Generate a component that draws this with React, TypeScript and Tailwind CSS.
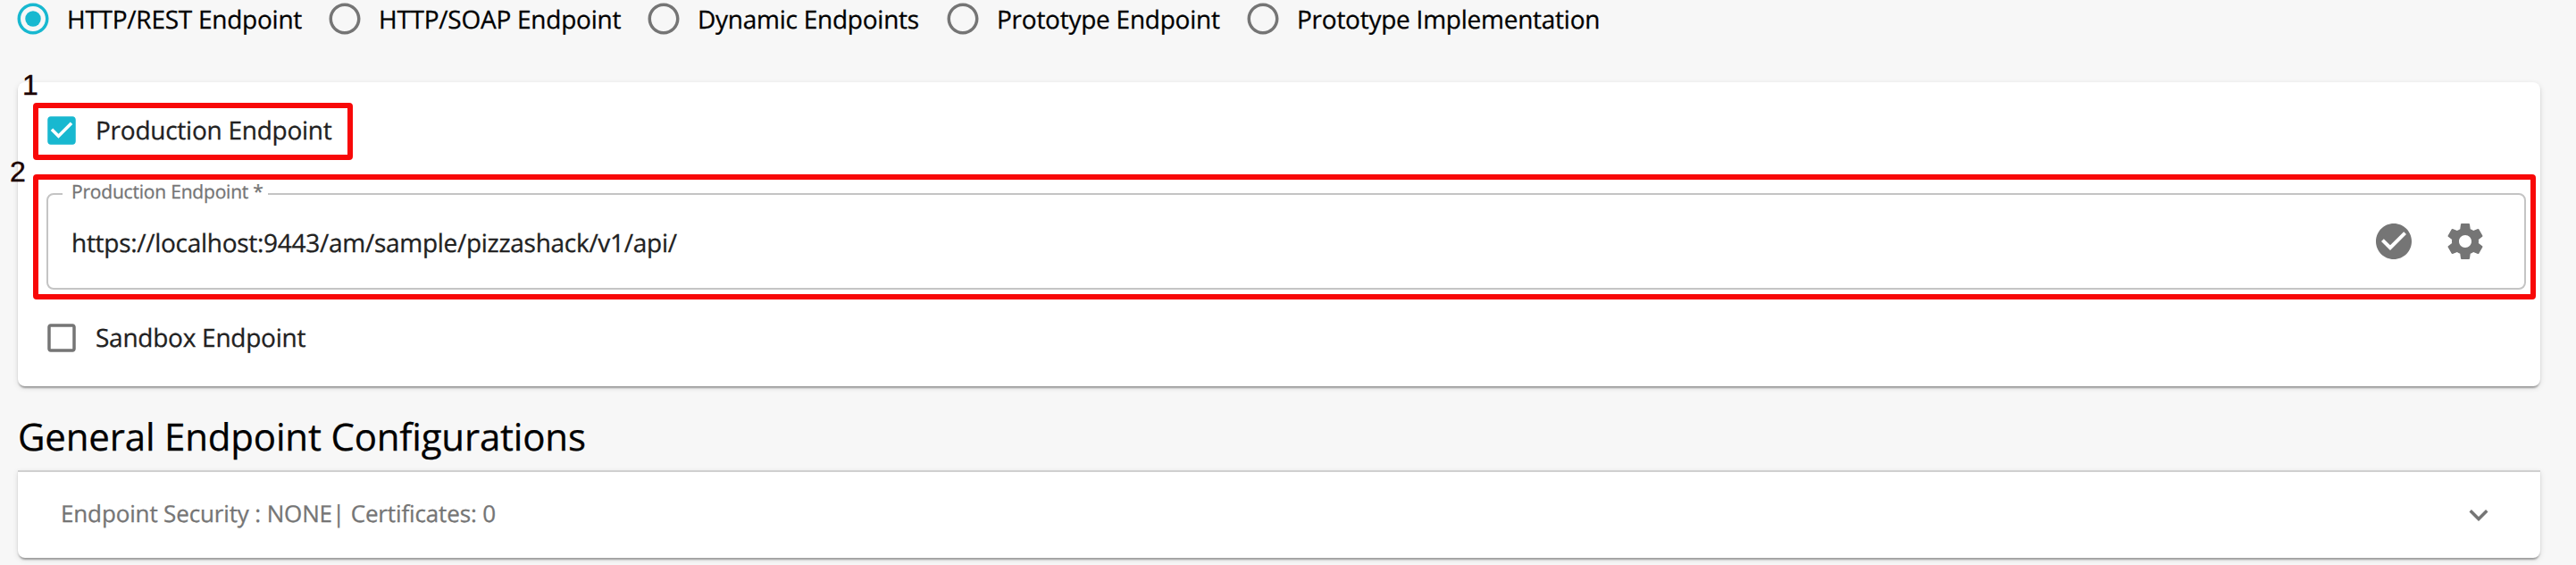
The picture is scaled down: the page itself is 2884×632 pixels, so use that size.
import React from "react";

const ICONS = {
  radioOff:
    "M12 2C6.48 2 2 6.48 2 12s4.48 10 10 10 10-4.48 10-10S17.52 2 12 2zm0 18c-4.42 0-8-3.58-8-8s3.58-8 8-8 8 3.58 8 8-3.58 8-8 8z",
  checkboxOn:
    "M19 3H5c-1.11 0-2 .9-2 2v14c0 1.1.89 2 2 2h14c1.11 0 2-.9 2-2V5c0-1.1-.89-2-2-2zm-9 14l-5-5 1.41-1.41L10 14.17l7.59-7.59L19 8l-9 9z",
  checkboxOff:
    "M19 5v14H5V5h14m0-2H5c-1.1 0-2 .9-2 2v14c0 1.1.9 2 2 2h14c1.1 0 2-.9 2-2V5c0-1.1-.9-2-2-2z",
  checkCircle:
    "M12 2C6.48 2 2 6.48 2 12s4.48 10 10 10 10-4.48 10-10S17.52 2 12 2zm-2 15l-5-5 1.41-1.41L10 14.17l7.59-7.59L19 8l-9 9z",
  settings:
    "M19.43 12.98c.04-.32.07-.64.07-.98s-.03-.66-.07-.98l2.11-1.65c.19-.15.24-.42.12-.64l-2-3.46c-.12-.22-.39-.3-.61-.22l-2.49 1c-.52-.4-1.08-.73-1.69-.98l-.38-2.65C14.46 2.18 14.25 2 14 2h-4c-.25 0-.46.18-.49.42l-.38 2.65c-.61.25-1.17.59-1.69.98l-2.49-1c-.23-.09-.49 0-.61.22l-2 3.46c-.13.22-.07.49.12.64l2.11 1.65c-.04.32-.07.65-.07.98s.03.66.07.98l-2.11 1.65c-.19.15-.24.42-.12.64l2 3.46c.12.22.39.3.61.22l2.49-1c.52.4 1.08.73 1.69.98l.38 2.65c.03.24.24.42.49.42h4c.25 0 .46-.18.49-.42l.38-2.65c.61-.25 1.17-.59 1.69-.98l2.49 1c.23.09.49 0 .61-.22l2-3.46c.12-.22.07-.49-.12-.64l-2.11-1.65zM12 15.5c-1.93 0-3.5-1.57-3.5-3.5s1.57-3.5 3.5-3.5 3.5 1.57 3.5 3.5-1.57 3.5-3.5 3.5z",
  expand: "M16.59 8.59L12 13.17 7.41 8.59 6 10l6 6 6-6z",
};

function Icon({ path, className }: { path: string; className: string }) {
  return (
    <svg viewBox="0 0 24 24" fill="currentColor" className={`block shrink-0 ${className}`}>
      <path d={path} />
    </svg>
  );
}

const OPTIONS = [
  { label: "HTTP/REST Endpoint", width: "w-[349px]", selected: true },
  { label: "HTTP/SOAP Endpoint", width: "w-[357px]" },
  { label: "Dynamic Endpoints", width: "w-[335px]" },
  { label: "Prototype Endpoint", width: "w-[336px]" },
  { label: "Prototype Implementation", width: "w-[420px]" },
];

function RadioOption({ label, width, selected }: { label: string; width: string; selected?: boolean }) {
  return (
    <label className={`flex h-[42px] shrink-0 items-center gap-[17px] ${width}`}>
      <svg
        viewBox="0 0 24 24"
        fill="currentColor"
        className={`block size-[42px] shrink-0 ${selected ? "text-[#18b8d0]" : "text-[#757575]"}`}
      >
        <path d={ICONS.radioOff} />
        {selected && <circle cx="12" cy="12" r="5" />}
      </svg>
      <span className="mt-[2px] whitespace-nowrap text-black">{label}</span>
    </label>
  );
}

function CheckOption({ label, checked }: { label: string; checked?: boolean }) {
  return (
    <label className="flex h-[42px] items-center gap-[17px]">
      <Icon
        path={checked ? ICONS.checkboxOn : ICONS.checkboxOff}
        className={checked ? "size-[42px] text-[#18b8d0]" : "size-[42px] text-[#757575]"}
      />
      <span className="text-[#212121]">{label}</span>
    </label>
  );
}

const SHADOW =
  "shadow-[0_4px_2px_-2px_rgba(0,0,0,0.2),0_2px_2px_0_rgba(0,0,0,0.14),0_2px_6px_0_rgba(0,0,0,0.12)]";

export default function App() {
  return (
    <div className="relative h-[632px] w-[2884px] overflow-hidden bg-[#f7f7f7] font-['Open_Sans',sans-serif] text-[28px] leading-[42px] tracking-[-0.25px] [-webkit-text-stroke:0.3px] [text-rendering:geometricPrecision]">
      <div className="flex pl-4">
        {OPTIONS.map((o) => (
          <RadioOption key={o.label} {...o} />
        ))}
      </div>

      <section className={`relative mt-[50px] mr-10 ml-5 flex h-[340px] flex-col rounded-lg bg-white pt-[33px] pl-7 pr-4 ${SHADOW}`}>
        <CheckOption label="Production Endpoint" checked />

        <fieldset className="mt-[35px] ml-1 h-[122px] rounded-lg border-2 border-[#c4c4c4] pl-4">
          <legend className="h-[30px] w-[230px] pl-[10px] text-[21px] leading-[26px] tracking-[-0.2px] whitespace-nowrap text-[#757575]">
            Production Endpoint<span className="ml-[5px]">*</span>
          </legend>
          <div className="flex h-[76px] items-center pr-[42px] pl-[10px]">
            <span className="mt-[4px] flex-1 tracking-[-0.28px] text-[#212121]">https://localhost:9443/am/sample/pizzashack/v1/api/</span>
            <div className="flex gap-8 text-[#757575]">
              <Icon path={ICONS.checkCircle} className="size-12" />
              <Icon path={ICONS.settings} className="size-12" />
            </div>
          </div>
        </fieldset>

        <div className="mt-[33px]">
          <CheckOption label="Sandbox Endpoint" />
        </div>

        <div className="absolute top-[23px] left-[17px] h-[64px] w-[358px] rounded-[4px] border-6 border-[#f80808]" />
        <div className="absolute top-[103px] left-[17px] h-[140px] w-[2802px] rounded-[4px] border-6 border-[#f80808]" />
        <span className="absolute -top-[15px] left-[5px] font-['Liberation_Sans',Arial,sans-serif] text-[32px] leading-[36px] text-[#1a0000] [-webkit-text-stroke:0.4px]">1</span>
        <span className="absolute top-[82px] -left-[9px] font-['Liberation_Sans',Arial,sans-serif] text-[32px] leading-[36px] text-[#1a0000] [-webkit-text-stroke:0.4px]">2</span>
      </section>

      <h2 className="mt-[27px] ml-5 h-[67px] text-[42px] leading-[60px] tracking-[-0.18px] text-black">General Endpoint Configurations</h2>

      <section className={`mr-10 ml-5 flex h-[98px] items-center justify-between rounded-b-lg border-t-2 border-[#d0d0d0] bg-white pr-12 pl-[48px] ${SHADOW}`}>
        <span className="-mt-[4px] text-[26px] tracking-[-0.14px] text-[#757575]">Endpoint Security : NONE| Certificates: 0</span>
        <Icon path={ICONS.expand} className="size-[42px] text-[#757575]" />
      </section>
    </div>
  );
}
